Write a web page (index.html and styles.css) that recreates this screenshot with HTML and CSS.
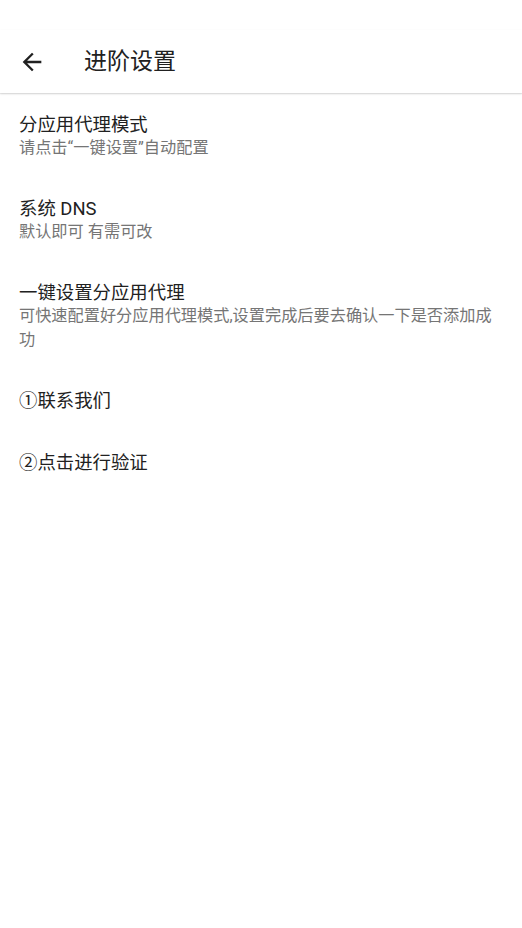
FILE: index.html
```html
<!DOCTYPE html>
<html lang="zh-CN">
<head>
<meta charset="utf-8">
<link rel="stylesheet" href="styles.css">
<title>进阶设置</title>
</head>
<body>
<div class="app">
  <div class="statusbar"></div>
  <header class="toolbar">
    <svg class="back" viewBox="0 0 24 24" aria-hidden="true"><path d="M20 11H7.83l5.59-5.59L12 4l-8 8 8 8 1.41-1.41L7.83 13H20v-2z"/></svg>
    <h1 class="title">进阶设置</h1>
  </header>
  <main class="list">
    <div class="pref">
      <div class="pref-title">分应用代理模式</div>
      <div class="pref-summary">请点击“一键设置”自动配置</div>
    </div>
    <div class="pref">
      <div class="pref-title">系统 DNS</div>
      <div class="pref-summary">默认即可 有需可改</div>
    </div>
    <div class="pref">
      <div class="pref-title">一键设置分应用代理</div>
      <div class="pref-summary">可快速配置好分应用代理模式,设置完成后要去确认一下是否添加成功</div>
    </div>
    <div class="pref single">
      <div class="pref-title">①联系我们</div>
    </div>
    <div class="pref single">
      <div class="pref-title">②点击进行验证</div>
    </div>
  </main>
</div>
</body>
</html>
```

FILE: styles.css
```css
html, body {
  margin: 0;
  padding: 0;
  background: #ffffff;
}
body {
  font-family: Roboto, "Noto Sans CJK SC", sans-serif;
  color: #212121;
  width: 522px;
  height: 928px;
  overflow: hidden;
}
.app {
  display: flex;
  flex-direction: column;
}
.statusbar {
  height: 30px;
  background: #ffffff;
}
.toolbar {
  height: 63px;
  display: flex;
  align-items: center;
  padding-left: 18px;
  background: #ffffff;
  box-shadow: 0 1px 2px rgba(0, 0, 0, 0.12), 0 1px 1px rgba(0, 0, 0, 0.06);
  position: relative;
  z-index: 1;
}
.back {
  width: 28px;
  height: 28px;
  fill: #212121;
  flex: none;
}
.title {
  margin: 0 0 0 38px;
  font-size: 23px;
  font-weight: 400;
  color: #212121;
  line-height: 30px;
}
.list {
  display: flex;
  flex-direction: column;
}
.pref {
  padding: 21px 24px 17px 19px;
}
.pref.single {
  padding: 21px 24px 19px 19px;
}
.pref-title {
  font-size: 18.4px;
  line-height: 22px;
  color: #212121;
}
.pref-summary {
  font-size: 16.2px;
  line-height: 24px;
  color: #757575;
}
```
